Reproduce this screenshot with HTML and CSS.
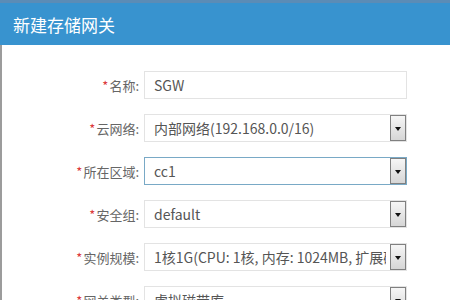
FILE: index.html
```html
<!DOCTYPE html>
<html lang="zh-CN">
<head>
    <meta charset="UTF-8">
    <meta name="viewport" content="width=device-width, initial-scale=1.0">
    <title>新建存储网关</title>
    <link rel="stylesheet" href="styles.css">
</head>
<body>
    <div class="dialog">
        <header class="dialog-header">
            <h1>新建存储网关</h1>
        </header>

        <main class="dialog-body">
            <div class="form-row">
                <label class="form-label"><span class="req">*</span>名称:</label>
                <div class="field">SGW</div>
            </div>
            <div class="form-row">
                <label class="form-label"><span class="req">*</span>云网络:</label>
                <div class="field select">
                    <span class="value">内部网络(192.168.0.0/16)</span>
                    <span class="arrow"></span>
                </div>
            </div>
            <div class="form-row">
                <label class="form-label"><span class="req">*</span>所在区域:</label>
                <div class="field select focused">
                    <span class="value">cc1</span>
                    <span class="arrow"></span>
                </div>
            </div>
            <div class="form-row">
                <label class="form-label"><span class="req">*</span>安全组:</label>
                <div class="field select">
                    <span class="value">default</span>
                    <span class="arrow"></span>
                </div>
            </div>
            <div class="form-row">
                <label class="form-label"><span class="req">*</span>实例规模:</label>
                <div class="field select">
                    <span class="value">1核1G(CPU: 1核, 内存: 1024MB, 扩展磁盘: 20GB)</span>
                    <span class="arrow"></span>
                </div>
            </div>
            <div class="form-row">
                <label class="form-label"><span class="req">*</span>网关类型:</label>
                <div class="field select">
                    <span class="value">虚拟磁带库</span>
                    <span class="arrow"></span>
                </div>
            </div>
        </main>
    </div>
</body>
</html>
```

FILE: styles.css
```css
body {
    margin: 0;
    padding: 0;
    background-color: #fff;
    font-family: "Noto Sans CJK SC", "Noto Sans", sans-serif;
    overflow: hidden;
}
.dialog {
    width: 450px;
    height: 300px;
    border-left: 2px solid #9c9c9c;
    box-sizing: border-box;
}
.dialog-header {
    background: #3893cf;
    border-top: 3px solid #5b8cb6;
    height: 42px;
    margin-left: -2px;
    padding-left: 13px;
    display: flex;
    align-items: center;
}
.dialog-header h1 {
    margin: 0;
    color: white;
    font-size: 17px;
    font-weight: normal;
}
.dialog-body {
    padding-top: 26px;
    display: flex;
    flex-direction: column;
    gap: 15px;
}
.form-row {
    display: flex;
    align-items: center;
    height: 28px;
}
.form-label {
    width: 137px;
    text-align: right;
    padding-right: 5px;
    font-size: 13px;
    color: #666;
}
.req {
    color: #dc3b3b;
    margin-right: 1px;
}
.field {
    width: 263px;
    height: 28px;
    box-sizing: border-box;
    border: 1px solid #e3e3e3;
    padding-left: 9px;
    font-size: 14px;
    color: #555;
    display: flex;
    align-items: center;
    position: relative;
}
.select .value {
    white-space: nowrap;
    overflow: hidden;
    width: 232px;
}
.focused {
    border-color: #79a9c6;
}
.arrow {
    position: absolute;
    right: 0;
    top: 0;
    width: 16px;
    height: 26px;
    box-sizing: border-box;
    border: 1px solid #808080;
    background: linear-gradient(#f6f6f6, #d6d6d6);
}
.arrow::after {
    content: "";
    position: absolute;
    left: 4px;
    top: 11px;
    border-left: 3.5px solid transparent;
    border-right: 3.5px solid transparent;
    border-top: 4px solid #111;
}
```
